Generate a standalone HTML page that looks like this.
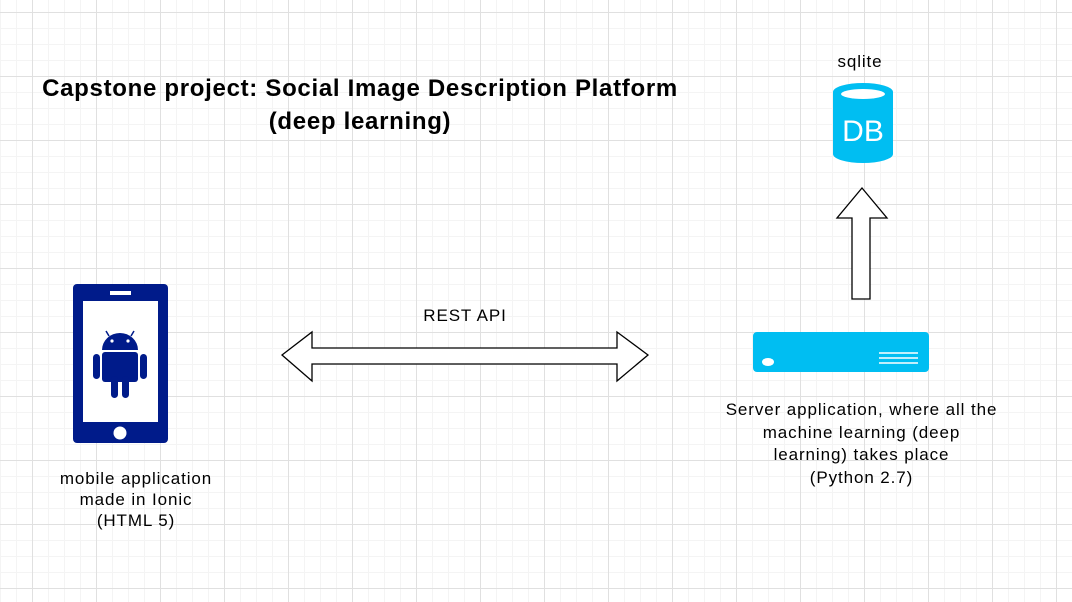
<!DOCTYPE html><html><head><style>
body{margin:0;width:1072px;height:602px;overflow:hidden;background:#fff;font-family:"Liberation Sans",sans-serif;position:relative;
background-image:linear-gradient(#e0e0e0 1px,transparent 1px),linear-gradient(90deg,#e0e0e0 1px,transparent 1px),linear-gradient(#f4f4f4 1px,transparent 1px),linear-gradient(90deg,#f4f4f4 1px,transparent 1px);
background-size:64px 64px,64px 64px,16px 16px,16px 16px;background-position:0 12px,32px 0,0 12px,0 0;}
.t{position:absolute;text-align:center;color:#000;font-size:17px;letter-spacing:0.9px;line-height:22px;white-space:nowrap}
</style></head><body>
<div class="t" style="left:0px;top:72px;width:720px;font-weight:bold;font-size:24px;letter-spacing:0.7px;line-height:33px">Capstone project: Social Image Description Platform<br>(deep learning)</div>
<div class="t" style="left:810px;top:51px;width:100px">sqlite</div>
<div class="t" style="left:365px;top:305px;width:200px">REST API</div>
<div class="t" style="left:20px;top:468px;width:232px;line-height:21px">mobile application<br>made in Ionic<br>(HTML 5)</div>
<div class="t" style="left:690px;top:399px;width:343px;line-height:22.5px">Server application, where all the<br>machine learning (deep<br>learning) takes place<br>(Python 2.7)</div>
<svg width="1072" height="602" style="position:absolute;left:0;top:0">
<rect x="73" y="284" width="95" height="159" rx="4" fill="#001b8a"/>
<rect x="83" y="301" width="75" height="121" fill="#fff"/>
<rect x="110" y="291" width="21" height="4" fill="#fff"/>
<circle cx="120" cy="433" r="6.5" fill="#fff"/>
<path d="M102 350a18 17 0 0 1 36 0z" fill="#001b8a"/>
<path d="M109 336l-3-5M131 336l3-5" stroke="#001b8a" stroke-width="1.5"/>
<circle cx="112" cy="341" r="1.6" fill="#fff"/><circle cx="128" cy="341" r="1.6" fill="#fff"/>
<rect x="102" y="352" width="36" height="30" rx="3" fill="#001b8a"/>
<rect x="93" y="354" width="7" height="25" rx="3.5" fill="#001b8a"/>
<rect x="140" y="354" width="7" height="25" rx="3.5" fill="#001b8a"/>
<rect x="111" y="376" width="7" height="22" rx="3.5" fill="#001b8a"/>
<rect x="122" y="376" width="7" height="22" rx="3.5" fill="#001b8a"/>
<path d="M282 355L312 332V348H617V332L648 355L617 381V364H312V381Z" fill="#fff" stroke="#000" stroke-width="1.3"/>
<path d="M862 188L887 218H870V299H852V218H837Z" fill="#fff" stroke="#000" stroke-width="1.3"/>
<path d="M833 92a30 9 0 0 1 60 0V154a30 9 0 0 1 -60 0Z" fill="#00bef2"/>
<ellipse cx="863" cy="94" rx="22" ry="5" fill="#fff"/>
<text x="863" y="141" text-anchor="middle" font-size="30" fill="#fff" font-family="Liberation Sans">DB</text>
<rect x="753" y="332" width="176" height="40" rx="4" fill="#00bef2"/>
<ellipse cx="768" cy="362" rx="6" ry="4" fill="#fff"/>
<path d="M879 353h39M879 358h39M879 363h39" stroke="#fff" stroke-width="1.5"/>
</svg>
</body></html>
